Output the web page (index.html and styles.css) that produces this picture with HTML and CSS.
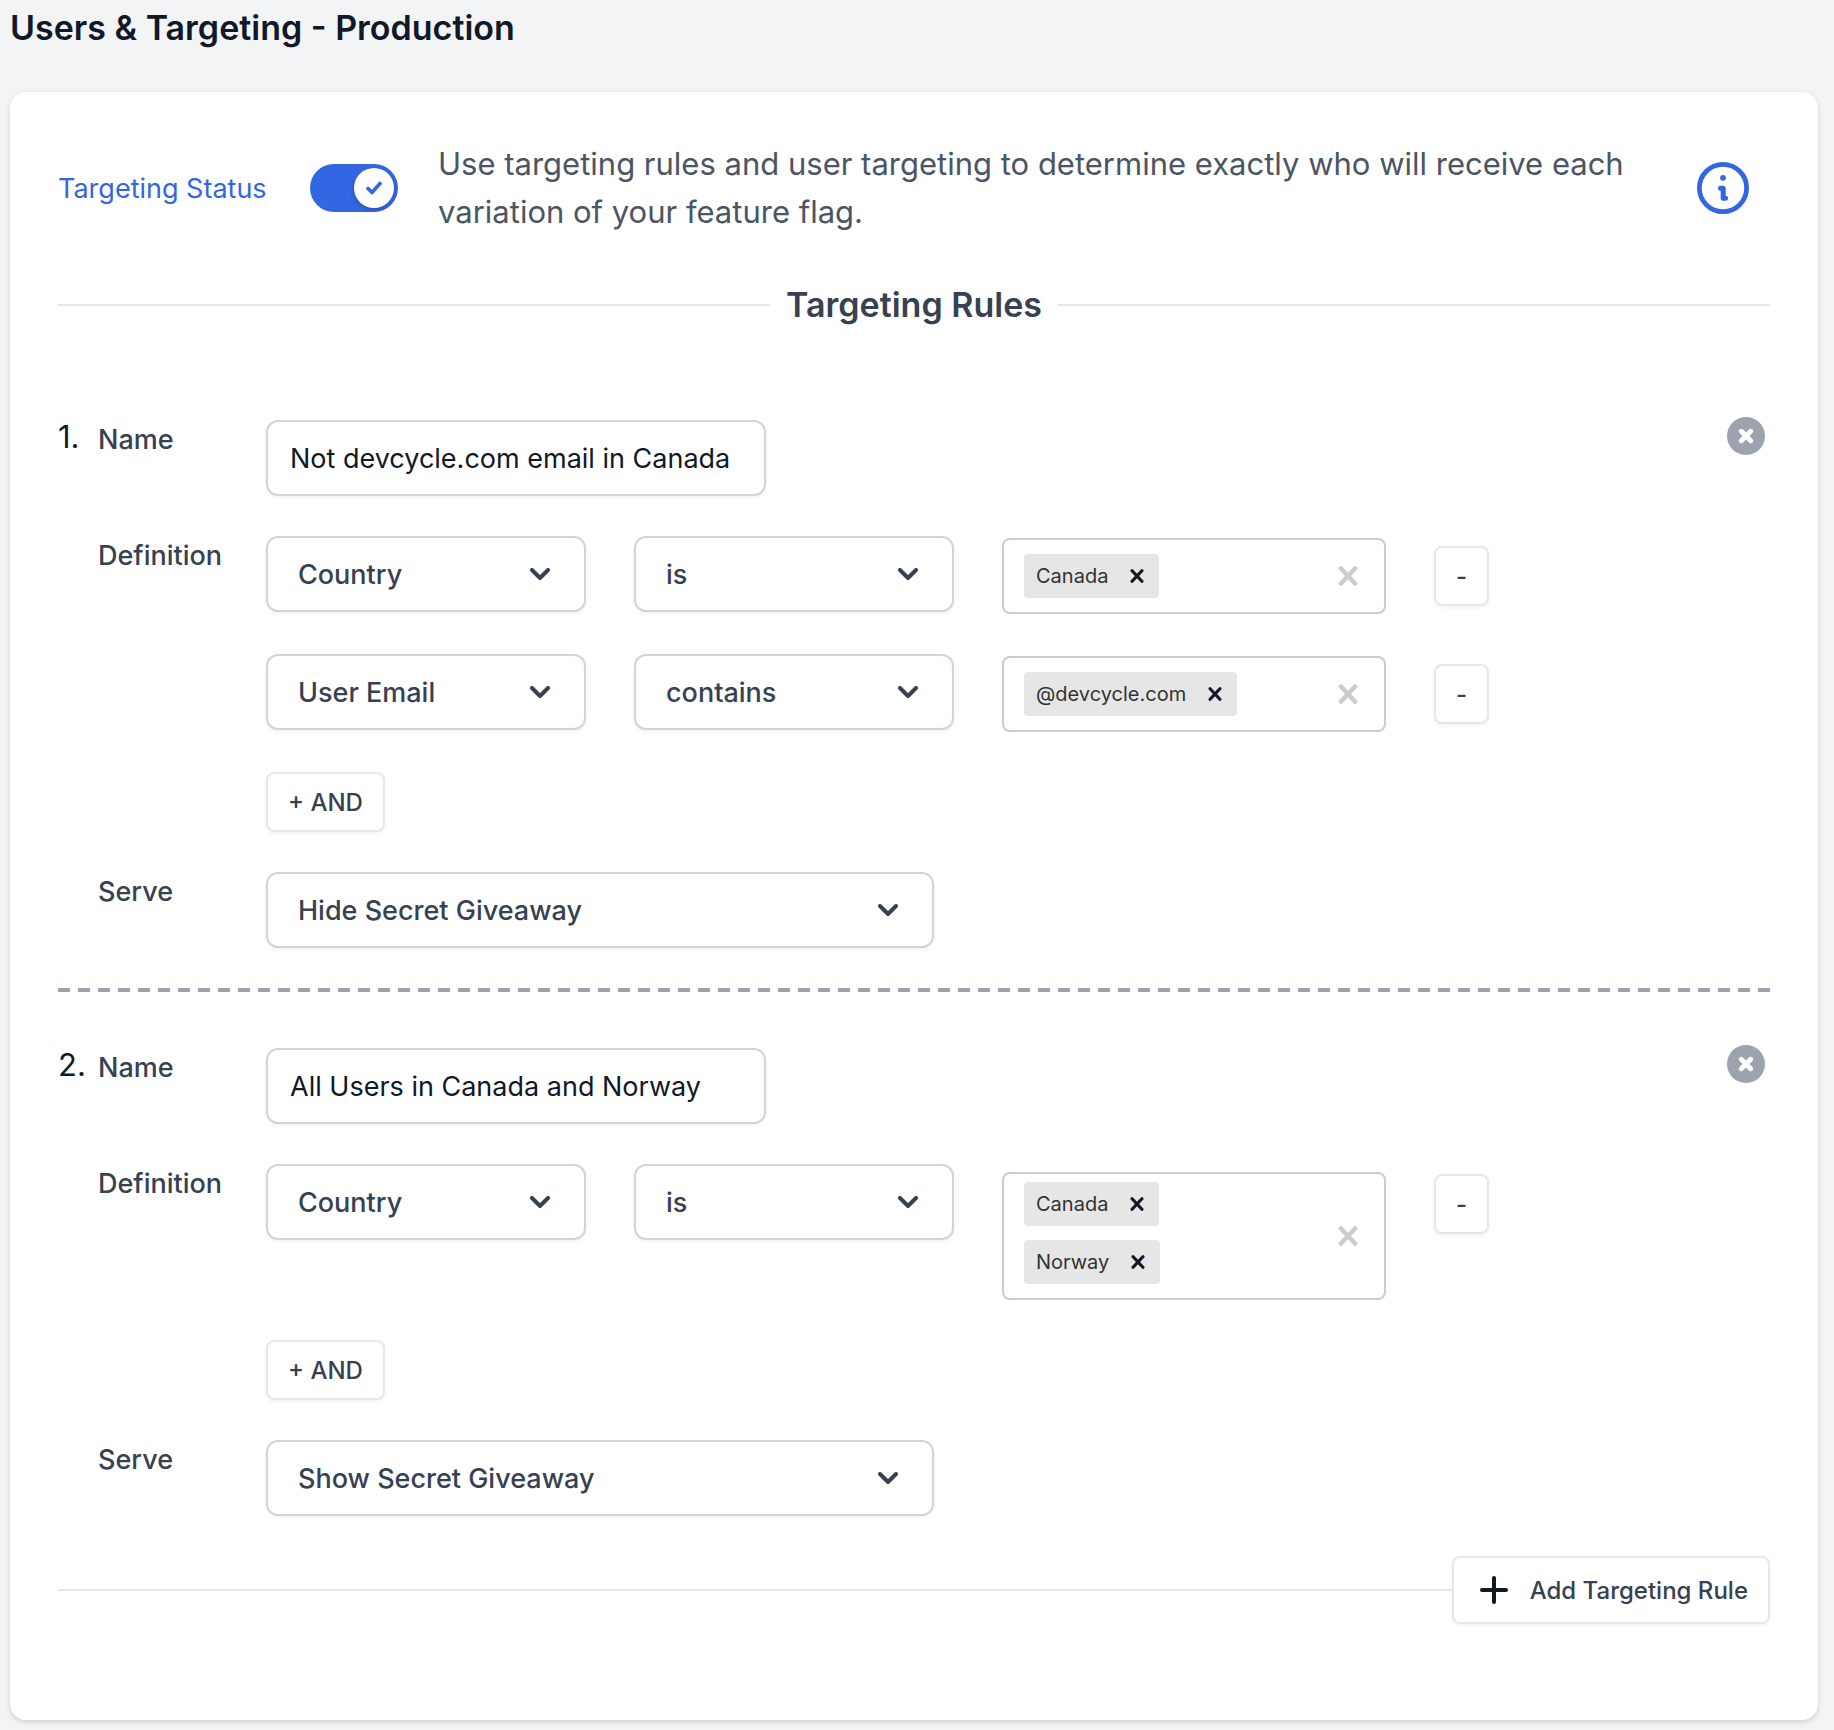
FILE: index.html
```html
<!DOCTYPE html>
<html lang="en">
<head>
<meta charset="utf-8">
<meta name="viewport" content="width=device-width, initial-scale=1">
<title>Users &amp; Targeting - Production</title>
<link rel="stylesheet" href="styles.css">
</head>
<body>
<svg class="sprite" aria-hidden="true">
  <symbol id="chevron" viewBox="0 0 20 12"><path d="M2 2l8 8 8-8" fill="none" stroke="currentColor" stroke-width="4" stroke-linecap="round" stroke-linejoin="round"/></symbol>
  <symbol id="cross" viewBox="0 0 20 20"><path d="M3 2.500L17 17.500M17 2.500L3 17.500" fill="none" stroke="currentColor" stroke-width="4.600" stroke-linecap="round"/></symbol>
  <symbol id="cross-circle" viewBox="0 0 38 38"><circle cx="19" cy="19" r="19" fill="#9ca3af"/><path d="M14.300 14.300l9.400 9.400M23.700 14.300l-9.400 9.400" fill="none" stroke="#fff" stroke-width="5" stroke-linecap="round"/></symbol>
</svg>

<h1 class="page-title">Users &amp; Targeting - Production</h1>

<main class="card">
  <section class="status">
    <label class="status__label" for="targeting-status">Targeting Status</label>
    <span class="toggle">
      <input class="toggle__input" id="targeting-status" type="checkbox" role="switch" checked>
      <svg class="toggle__check" viewBox="0 0 16 14" aria-hidden="true"><path d="M2 7.500l4 4L14 2.500" fill="none" stroke="currentColor" stroke-width="3.600" stroke-linecap="round" stroke-linejoin="round"/></svg>
    </span>
    <p class="status__text">Use targeting rules and user targeting to determine exactly who will receive each variation of your feature flag.</p>
    <button class="info" type="button" aria-label="More information">
      <svg viewBox="0 0 52 52" width="52" height="52" aria-hidden="true"><circle cx="26" cy="26" r="23.600" fill="none" stroke="currentColor" stroke-width="4.800"/><circle cx="26" cy="15.800" r="2.900" fill="currentColor"/><path d="M23.500 26.300h2.700v10h2.300" fill="none" stroke="currentColor" stroke-width="5" stroke-linecap="round" stroke-linejoin="round"/></svg>
    </button>
  </section>

  <h2 class="section-title">Targeting Rules</h2>

  <section class="rule">
    <span class="rule__number">1.</span>
    <label class="rule__label" for="rule1-name">Name</label>
    <div class="rule__head">
      <input class="text-box" id="rule1-name" type="text" value="Not devcycle.com email in Canada">
      <button class="remove" type="button" aria-label="Remove rule 1"><svg width="38" height="38"><use href="#cross-circle"/></svg></button>
    </div>

    <span class="rule__label">Definition</span>
    <div class="rule__body">
      <div class="condition">
        <span class="dropdown"><select class="dropdown__control" aria-label="Property"><option>Country</option></select><svg class="dropdown__icon"><use href="#chevron"/></svg></span>
        <span class="dropdown"><select class="dropdown__control" aria-label="Comparator"><option>is</option></select><svg class="dropdown__icon"><use href="#chevron"/></svg></span>
        <div class="picker">
          <div class="picker__values">
            <span class="chip">Canada<button class="chip__remove" type="button" aria-label="Remove Canada"><svg width="14" height="14"><use href="#cross"/></svg></button></span>
          </div>
          <button class="picker__clear" type="button" aria-label="Clear values"><svg width="20" height="20"><use href="#cross"/></svg></button>
        </div>
        <button class="button" type="button" aria-label="Remove condition">-</button>
      </div>
      <div class="condition">
        <span class="dropdown"><select class="dropdown__control" aria-label="Property"><option>User Email</option></select><svg class="dropdown__icon"><use href="#chevron"/></svg></span>
        <span class="dropdown"><select class="dropdown__control" aria-label="Comparator"><option>contains</option></select><svg class="dropdown__icon"><use href="#chevron"/></svg></span>
        <div class="picker">
          <div class="picker__values">
            <span class="chip">@devcycle.com<button class="chip__remove" type="button" aria-label="Remove @devcycle.com"><svg width="14" height="14"><use href="#cross"/></svg></button></span>
          </div>
          <button class="picker__clear" type="button" aria-label="Clear values"><svg width="20" height="20"><use href="#cross"/></svg></button>
        </div>
        <button class="button" type="button" aria-label="Remove condition">-</button>
      </div>
      <button class="button" type="button">+ AND</button>
    </div>

    <label class="rule__label" for="rule1-serve">Serve</label>
    <span class="dropdown dropdown--wide"><select class="dropdown__control" id="rule1-serve"><option>Hide Secret Giveaway</option></select><svg class="dropdown__icon"><use href="#chevron"/></svg></span>
  </section>

  <hr class="dashes">

  <section class="rule">
    <span class="rule__number">2.</span>
    <label class="rule__label" for="rule2-name">Name</label>
    <div class="rule__head">
      <input class="text-box" id="rule2-name" type="text" value="All Users in Canada and Norway">
      <button class="remove" type="button" aria-label="Remove rule 2"><svg width="38" height="38"><use href="#cross-circle"/></svg></button>
    </div>

    <span class="rule__label">Definition</span>
    <div class="rule__body">
      <div class="condition">
        <span class="dropdown"><select class="dropdown__control" aria-label="Property"><option>Country</option></select><svg class="dropdown__icon"><use href="#chevron"/></svg></span>
        <span class="dropdown"><select class="dropdown__control" aria-label="Comparator"><option>is</option></select><svg class="dropdown__icon"><use href="#chevron"/></svg></span>
        <div class="picker picker--stacked">
          <div class="picker__values">
            <span class="chip">Canada<button class="chip__remove" type="button" aria-label="Remove Canada"><svg width="14" height="14"><use href="#cross"/></svg></button></span>
            <span class="chip">Norway<button class="chip__remove" type="button" aria-label="Remove Norway"><svg width="14" height="14"><use href="#cross"/></svg></button></span>
          </div>
          <button class="picker__clear" type="button" aria-label="Clear values"><svg width="20" height="20"><use href="#cross"/></svg></button>
        </div>
        <button class="button" type="button" aria-label="Remove condition">-</button>
      </div>
      <button class="button" type="button">+ AND</button>
    </div>

    <label class="rule__label" for="rule2-serve">Serve</label>
    <span class="dropdown dropdown--wide"><select class="dropdown__control" id="rule2-serve"><option>Show Secret Giveaway</option></select><svg class="dropdown__icon"><use href="#chevron"/></svg></span>
  </section>

  <div class="footer">
    <button class="button button--large" type="button">
      <svg width="28" height="28" viewBox="0 0 28 28" aria-hidden="true"><path d="M14 2v24M2 14h24" fill="none" stroke="#111827" stroke-width="4" stroke-linecap="round"/></svg>
      Add Targeting Rule
    </button>
  </div>
</main>
</body>
</html>
```
FILE: styles.css
```css
* {
  box-sizing: border-box;
}

body {
  margin: 0;
  padding: 0 16px 10px 10px;
  background: #f3f4f6;
  color: #111827;
  font-family: Inter, "Liberation Sans", sans-serif;
  font-size: 27px;
}

button,
input,
select {
  margin: 0;
  font: inherit;
  color: inherit;
}

button {
  padding: 0;
  border: 0;
  background: none;
  cursor: pointer;
}

svg {
  display: block;
}

.sprite {
  position: absolute;
  width: 0;
  height: 0;
}

.page-title {
  margin: 0 0 36px;
  font-size: 34px;
  font-weight: 600;
  line-height: 56px;
}

.card {
  padding: 48px 48px 96px;
  border-radius: 16px;
  background: #fff;
  box-shadow: 0 2px 6px rgba(0, 0, 0, 0.1), 0 2px 4px rgba(0, 0, 0, 0.06);
}

/* Status row */

.status {
  display: flex;
  align-items: center;
  gap: 40px;
  padding-right: 21px;
}

.status__label {
  min-width: 212px;
  color: #3366e3;
  white-space: nowrap;
}

.toggle {
  display: grid;
  flex: none;
}

.toggle__input {
  grid-area: 1 / 1;
  display: flex;
  justify-content: flex-end;
  width: 88px;
  height: 48px;
  padding: 4px;
  border-radius: 24px;
  background: #3366e3;
  appearance: none;
}

.toggle__input::before {
  content: "";
  width: 40px;
  height: 40px;
  border-radius: 50%;
  background: #fff;
  box-shadow: 0 2px 4px rgba(0, 0, 0, 0.2);
}

.toggle__check {
  grid-area: 1 / 1;
  align-self: center;
  justify-self: end;
  width: 16px;
  height: 14px;
  margin-right: 16px;
  color: #3366e3;
  pointer-events: none;
}

.status__text {
  flex: 1;
  margin: 0;
  color: #4b5563;
  font-size: 31px;
  line-height: 48px;
}

.info {
  flex: none;
  color: #3366e3;
}

.section-title {
  display: flex;
  align-items: center;
  gap: 16px;
  margin: 44px 0 90px;
  color: #374151;
  font-size: 34px;
  font-weight: 600;
  line-height: 50px;
}

.section-title::before,
.section-title::after {
  content: "";
  flex: 1;
  height: 2px;
  background: #e5e7eb;
}

/* Rules */

.rule {
  display: grid;
  grid-template-columns: 40px 168px 1fr;
  row-gap: 40px;
  align-items: start;
}

.rule__number {
  font-size: 31px;
  line-height: 34px;
}

.rule__label {
  grid-column: 2;
  color: #374151;
  font-weight: 500;
  line-height: 40px;
}

.rule__head {
  display: flex;
  align-items: flex-start;
  justify-content: space-between;
  padding-right: 5px;
}

.rule__body {
  display: flex;
  flex-direction: column;
  align-items: flex-start;
  gap: 40px;
}

.text-box {
  width: 500px;
  height: 76px;
  padding: 0 22px;
  border: 2px solid #d1d5db;
  border-radius: 12px;
  background: #fff;
  box-shadow: 0 2px 4px rgba(0, 0, 0, 0.05);
}

.remove {
  margin-top: -3px;
}

.condition {
  display: flex;
  align-items: flex-start;
  gap: 48px;
}

.condition .button {
  margin-top: 10px;
}

.dropdown {
  display: grid;
  width: 320px;
  color: #374151;
}

.dropdown--wide {
  width: 668px;
}

.dropdown__control {
  grid-area: 1 / 1;
  width: 100%;
  height: 76px;
  padding: 0 72px 0 30px;
  border: 2px solid #d1d5db;
  border-radius: 12px;
  background: #fff;
  box-shadow: 0 2px 4px rgba(0, 0, 0, 0.05);
  font-weight: 500;
  appearance: none;
}

.dropdown__icon {
  grid-area: 1 / 1;
  align-self: center;
  justify-self: end;
  width: 20px;
  height: 12px;
  margin-right: 36px;
  pointer-events: none;
}

.picker {
  display: flex;
  width: 384px;
  min-height: 76px;
  margin-top: 2px;
  border: 2px solid #ccc;
  border-radius: 8px;
}

.picker--stacked {
  margin-top: 8px;
}

.picker__values {
  display: flex;
  flex: 1;
  flex-wrap: wrap;
  gap: 14px;
  padding: 14px 16px 14px 20px;
}

.picker--stacked .picker__values {
  padding-top: 8px;
}

.picker__clear {
  display: grid;
  place-items: center;
  flex: none;
  width: 72px;
  color: #ccc;
}

.chip {
  display: flex;
  align-items: center;
  gap: 22px;
  height: 44px;
  padding: 0 15px 0 12px;
  border-radius: 4px;
  background: #e6e6e6;
  color: #333;
  font-size: 20px;
}

.chip__remove {
  color: #111827;
}

.button {
  height: 60px;
  padding: 0 20px;
  border: 2px solid #e5e7eb;
  border-radius: 8px;
  background: #fff;
  box-shadow: 0 2px 4px rgba(0, 0, 0, 0.05);
  color: #374151;
  font-size: 24px;
  font-weight: 500;
}

.button--large {
  display: flex;
  align-items: center;
  gap: 22px;
  height: 68px;
  padding: 0 20px 0 26px;
}

.dashes {
  height: 4px;
  margin: 40px 0 56px;
  border: 0;
  background: repeating-linear-gradient(90deg, #9ca3af 0 12px, transparent 12px 20px);
}

.footer {
  display: flex;
  align-items: center;
  margin-top: 40px;
}

.footer::before {
  content: "";
  flex: 1;
  height: 2px;
  background: #e5e7eb;
}
```
